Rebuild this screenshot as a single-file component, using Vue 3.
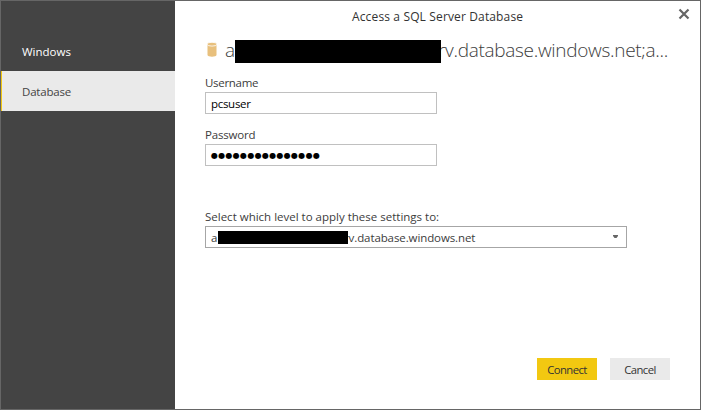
<script setup>
import { ref } from 'vue'

const tabs = ['Windows', 'Database']
const active = ref('Database')
const username = ref('pcsuser')
const passwordDots = '●'.repeat(15)
</script>

<template>
  <div class="dialog">
    <nav class="sidebar">
      <div
        v-for="tab in tabs"
        :key="tab"
        class="tab"
        :class="[tab.toLowerCase(), { active: tab === active }]"
        @click="active = tab"
      ><span>{{ tab }}</span></div>
    </nav>

    <main class="content">
      <header class="titlebar">
        <span class="title">Access a SQL Server Database</span>
        <svg class="close" width="12" height="12" viewBox="0 0 12 12">
          <path d="M1.5 1.5L10.5 10.5M10.5 1.5L1.5 10.5" fill="none" stroke="#666" stroke-width="2.2" />
        </svg>
      </header>

      <div class="source">
        <svg class="db" width="10" height="16" viewBox="0 0 10 16">
          <path d="M0.5 3.2V13C0.5 15.2 9.5 15.2 9.5 13V3.2Z" fill="#e8c07d" />
          <ellipse cx="5" cy="2.2" rx="4.8" ry="1.9" fill="#e8c07d" stroke="#fff" stroke-width=".8" />
        </svg>
        <span class="lead">a</span>
        <span class="redact"></span>
        <span class="rest">rv.database.windows.net;a...</span>
      </div>

      <div class="label user-label"><span>Username</span></div>
      <div class="field"><span class="user-value">{{ username }}</span></div>
      <div class="label pass-label"><span>Password</span></div>
      <div class="field"><span class="dots">{{ passwordDots }}</span></div>

      <div class="label level-label"><span>Select which level to apply these settings to:</span></div>
      <div class="select">
        <span class="lead">a</span>
        <span class="redact"></span>
        <span class="rest">rv.database.windows.net</span>
        <svg class="arrow" width="6" height="4" viewBox="0 0 6 4">
          <path d="M0 0H5V1L3.5 3H1.5L0 1Z" fill="#666" />
        </svg>
      </div>

      <footer class="actions">
        <div class="button primary"><span>Connect</span></div>
        <div class="button"><span>Cancel</span></div>
      </footer>
    </main>
  </div>
</template>

<style>
body {
  background: #fff;
}
</style>

<style scoped>
.dialog {
  box-sizing: border-box;
  display: flex;
  width: 701px;
  height: 410px;
  border: 1px solid #666;
  background: #fff;
  color: #3c3c3c;
  font: 11.5px/16px "Open Sans", "Noto Sans", sans-serif;
  white-space: nowrap;
  overflow: hidden;
}
.sidebar {
  width: 174px;
  flex: none;
  padding-top: 30px;
  box-sizing: border-box;
  background: #444;
}
.tab {
  box-sizing: border-box;
  height: 40px;
  padding: 13px 0 0 20px;
  border-left: 1px solid transparent;
  color: #fff;
}
.tab.active {
  background: #eaeaea;
  border-left-color: #f2c811;
  color: #444;
}
.tab.database {
  letter-spacing: -0.2px;
}
.content {
  flex: 1;
  display: flex;
  flex-direction: column;
  min-width: 0;
  padding-left: 30px;
}
.titlebar {
  display: flex;
  justify-content: space-between;
  height: 39px;
  padding: 7px 10px 0 147px;
  box-sizing: border-box;
  color: #333;
}
.title {
  padding-top: 1px;
  font-size: 12px;
  letter-spacing: 0.14px;
}
.source {
  display: flex;
  height: 23px;
  font-size: 19px;
  font-weight: 300;
  line-height: 21px;
  letter-spacing: -0.31px;
}
.db {
  flex: none;
  margin: 2px 0 0 2px;
}
.source .lead {
  width: 10px;
  margin-left: 8px;
}
.source .redact {
  width: 206px;
  height: 23px;
  background: #000;
  position: relative;
}
.source .rest {
  margin-left: -3px;
}
.label {
  height: 17px;
}
.user-label {
  margin-top: 12px;
  letter-spacing: -0.3px;
}
.pass-label {
  margin-top: 13px;
  letter-spacing: -0.2px;
}
.level-label {
  margin-top: 43px;
}
.field {
  box-sizing: border-box;
  display: flex;
  align-items: center;
  width: 232px;
  height: 22px;
  padding: 2px 0 0 5px;
  border: 1px solid #c0c0c0;
  color: #000;
}
.user-value {
  letter-spacing: -0.3px;
}
.dots {
  margin-top: -1px;
  font: 8px/16px "DejaVu Sans", sans-serif;
  letter-spacing: 0.3px;
}
.select {
  box-sizing: border-box;
  display: flex;
  align-items: center;
  width: 422px;
  height: 22px;
  padding: 0 7px 0 5px;
  border: 1px solid #a6a6a6;
}
.select .lead {
  width: 7px;
  padding-top: 2px;
}
.select .redact {
  width: 130px;
  height: 13px;
  margin-top: 1px;
  background: #000;
  position: relative;
}
.select .rest {
  margin-left: -4px;
  padding-top: 2px;
  letter-spacing: -0.1px;
}
.arrow {
  margin: 0 0 0 auto;
}
.actions {
  display: flex;
  justify-content: flex-end;
  gap: 13px;
  margin-top: 110px;
  padding-right: 30px;
}
.button {
  box-sizing: border-box;
  display: flex;
  align-items: center;
  justify-content: center;
  width: 60px;
  height: 22px;
  padding-top: 1px;
  background: #eaeaea;
  color: #333;
  font-size: 11.3px;
  letter-spacing: -0.55px;
}
.primary {
  background: #f2c811;
}
</style>
